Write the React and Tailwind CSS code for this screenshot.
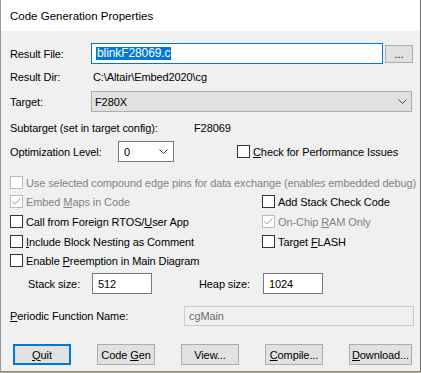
function Check({ checked, disabled, children }) {
  return (
    <div className="flex items-center h-[13px]">
      <span
        className={`w-[13px] h-[13px] shrink-0 border bg-white flex items-center justify-center ${
          disabled ? "border-[#bcbcbc]" : "border-[#333333]"
        }`}
      >
        {checked && (
          <svg width="11" height="11" viewBox="0 0 11 11">
            <polyline points="1.5,5.5 4,8 9.5,2.5" fill="none" stroke={disabled ? "#bcbcbc" : "#333"} strokeWidth="1.1" />
          </svg>
        )}
      </span>
      <span className={`ml-[3px] whitespace-nowrap ${disabled ? "text-[#838383]" : "text-black"}`}>{children}</span>
    </div>
  );
}

function Chevron() {
  return (
    <svg width="9" height="5" viewBox="0 0 9 5">
      <polyline points="0.5,0.5 4.5,4.5 8.5,0.5" fill="none" stroke="#404040" strokeWidth="1" />
    </svg>
  );
}

function Btn({ width, focused, children }) {
  return (
    <div
      className={`h-[21px] flex items-center justify-center bg-[#e1e1e1] ${
        focused ? "border-2 border-[#0078d7]" : "border border-[#adadad]"
      } ${width}`}
    >
      {children}
    </div>
  );
}

export default function App() {
  return (
    <div className="w-[421px] h-[373px] bg-[#b3ab7e] font-['Liberation_Sans',Arial,sans-serif] text-[11px] leading-[14px] tracking-[-0.1px] text-black">
      <div className="w-[421px] h-[372px] border-l border-r border-b border-l-[#9a9a9a] border-r-[#6e6e6e] border-b-[#8a8a8a] bg-[#f0f0f0] flex flex-col">
        <div className="h-[31px] bg-white flex items-center pl-[9px] shrink-0 text-[11.5px] tracking-normal">Code Generation Properties</div>

        <div className="flex flex-col pl-[9px]">
          {/* result file */}
          <div className="flex items-center mt-[12px] h-[21px]">
            <span className="w-[81px]">Result File:</span>
            <div className="w-[292px] h-[21px] bg-white border border-[#0078d7] flex items-center pl-[4px]">
              <span className="bg-[#0078d7] text-white leading-[13px] px-[1px] text-[12px]">blinkF28069.c</span>
            </div>
            <div className="ml-[2px] w-[28px] h-[18px] bg-[#e1e1e1] border border-[#adadad] flex items-center justify-center leading-[10px]">
              ...
            </div>
          </div>

          {/* result dir */}
          <div className="flex items-center mt-[5px] h-[16px]">
            <span className="w-[83px]">Result Dir:</span>
            <span>{"C:\\Altair\\Embed2020\\cg"}</span>
          </div>

          {/* target */}
          <div className="flex items-center mt-[6px] h-[21px]">
            <span className="w-[81px]">Target:</span>
            <div className="w-[321px] h-[21px] bg-[#e1e1e1] border border-[#adadad] flex items-center justify-between pl-[3px] pr-[4px]">
              <span>F280X</span>
              <Chevron />
            </div>
          </div>

          {/* subtarget */}
          <div className="flex items-center mt-[8px] h-[16px]">
            <span className="w-[184px]">Subtarget (set in target config):</span>
            <span>F28069</span>
          </div>

          {/* optimization */}
          <div className="flex items-center mt-[5px] h-[21px]">
            <span className="w-[108px]">Optimization Level:</span>
            <div className="w-[56px] h-[21px] bg-white border border-[#7a7a7a] flex items-center justify-between pl-[5px] pr-[5px]">
              <span>0</span>
              <Chevron />
            </div>
            <div className="ml-[63px]">
              <Check>
                <u>C</u>heck for Performance Issues
              </Check>
            </div>
          </div>

          <div className="mt-[14px]">
            <Check disabled>Use selected compound edge pins for data exchange (enables embedded debug)</Check>
          </div>

          <div className="flex mt-[6px]">
            <div className="w-[252px]">
              <Check checked disabled>
                Embed <u>M</u>aps in Code
              </Check>
            </div>
            <Check>Add Stack Check Code</Check>
          </div>

          <div className="flex mt-[7px]">
            <div className="w-[252px]">
              <Check>
                Call from Foreign RTOS/<u>U</u>ser App
              </Check>
            </div>
            <Check checked disabled>
              On-Chip <u>R</u>AM Only
            </Check>
          </div>

          <div className="flex mt-[7px]">
            <div className="w-[252px]">
              <Check>
                <u>I</u>nclude Block Nesting as Comment
              </Check>
            </div>
            <Check>
              Target <u>F</u>LASH
            </Check>
          </div>

          <div className="mt-[6px]">
            <Check>
              Enable <u>P</u>reemption in Main Diagram
            </Check>
          </div>

          {/* stack / heap */}
          <div className="flex items-center mt-[6px] h-[21px]">
            <span className="ml-[18px] w-[64px]">Stack size:</span>
            <div className="w-[60px] h-[21px] bg-white border border-[#7a7a7a] flex items-center pl-[5px]">512</div>
            <span className="ml-[47px] w-[64px]">Heap size:</span>
            <div className="w-[60px] h-[21px] bg-white border border-[#7a7a7a] flex items-center pl-[5px]">1024</div>
          </div>

          {/* periodic */}
          <div className="flex items-center mt-[12px] h-[20px]">
            <span className="w-[174px]">
              <u>P</u>eriodic Function Name:
            </span>
            <div className="w-[230px] h-[20px] bg-[#f0f0f0] border border-[#cccccc] flex items-center pl-[4px] text-[#6d6d6d]">
              cgMain
            </div>
          </div>

          {/* buttons */}
          <div className="flex items-center mt-[18px] pl-[3px]">
            <Btn width="w-[58px]" focused>
              <span>
                <u>Q</u>uit
              </span>
            </Btn>
            <div className="ml-[26px]">
              <Btn width="w-[58px]">
                <span>
                  Code <u>G</u>en
                </span>
              </Btn>
            </div>
            <div className="ml-[26px]">
              <Btn width="w-[58px]">View...</Btn>
            </div>
            <div className="ml-[26px]">
              <Btn width="w-[58px]">
                <span>
                  <u>C</u>ompile...
                </span>
              </Btn>
            </div>
            <div className="ml-[26px]">
              <Btn width="w-[63px]">
                <span>
                  <u>D</u>ownload...
                </span>
              </Btn>
            </div>
          </div>
        </div>
      </div>
    </div>
  );
}
